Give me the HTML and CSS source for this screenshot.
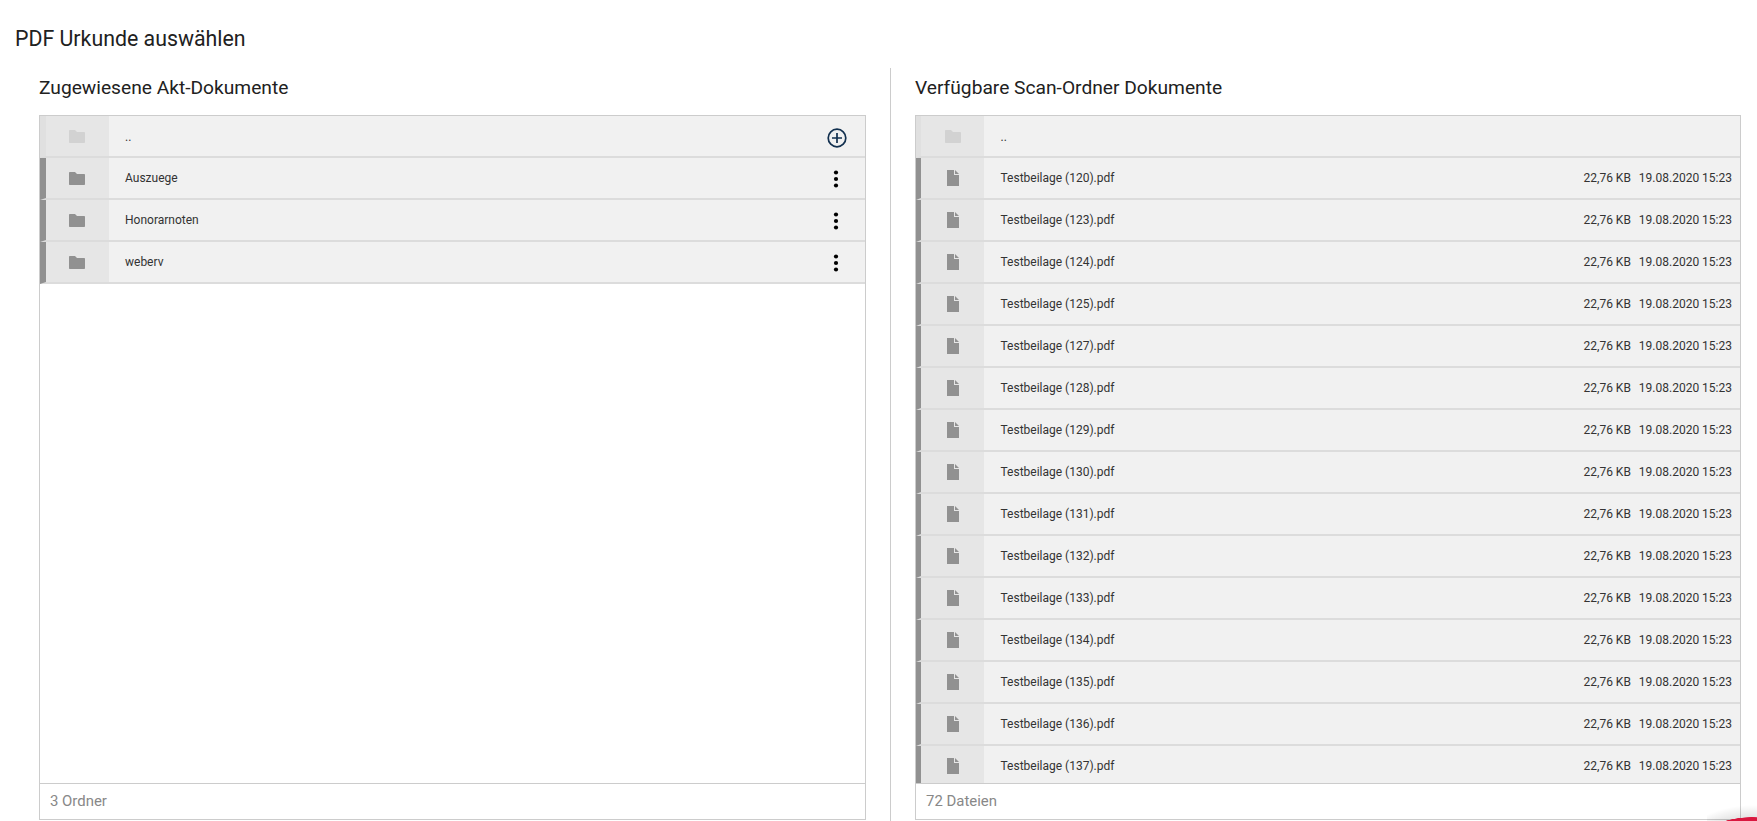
FILE: index.html
```html
<!DOCTYPE html>
<html lang="de">
<head>
<meta charset="utf-8">
<title>PDF Urkunde auswählen</title>
<link rel="stylesheet" href="styles.css">
</head>
<body>
<svg class="defs" width="0" height="0" aria-hidden="true">
  <symbol id="folder" viewBox="0 0 16 13"><path d="M0 1C0 .4.4 0 1 0h5l2 2h7c.6 0 1 .4 1 1v9c0 .6-.4 1-1 1H1c-.6 0-1-.4-1-1z"/></symbol>
  <symbol id="file" viewBox="0 0 12 16"><path d="M0 0h7v5h5v11H0zM8 0l4 4H8z"/></symbol>
  <symbol id="dots" viewBox="0 0 20 20"><circle cx="10" cy="3.500" r="2.100"/><circle cx="10" cy="10" r="2.100"/><circle cx="10" cy="16.500" r="2.100"/></symbol>
</svg>
<h1 class="title">PDF Urkunde auswählen</h1>
<main class="columns">
  <section class="col col-left">
    <h2 class="heading">Zugewiesene Akt-Dokumente</h2>
    <div class="panel">
      <div class="list">
        <div class="row row-up">
          <div class="icon-cell"><svg class="ic-folder"><use href="#folder"/></svg></div>
          <div class="name">..</div>
          <svg class="add" viewBox="0 0 20 20"><circle cx="10" cy="10" r="8.800"/><path d="M10 5v10M5 10h10"/></svg>
        </div>
        <div class="row">
          <div class="icon-cell"><svg class="ic-folder"><use href="#folder"/></svg></div>
          <div class="name">Auszuege</div>
          <svg class="dots"><use href="#dots"/></svg>
        </div>
        <div class="row">
          <div class="icon-cell"><svg class="ic-folder"><use href="#folder"/></svg></div>
          <div class="name">Honorarnoten</div>
          <svg class="dots"><use href="#dots"/></svg>
        </div>
        <div class="row">
          <div class="icon-cell"><svg class="ic-folder"><use href="#folder"/></svg></div>
          <div class="name">weberv</div>
          <svg class="dots"><use href="#dots"/></svg>
        </div>
      </div>
      <div class="foot">3 Ordner</div>
    </div>
  </section>
  <section class="col col-right">
    <h2 class="heading">Verfügbare Scan-Ordner Dokumente</h2>
    <div class="panel">
      <div class="list">
        <div class="row row-up">
          <div class="icon-cell"><svg class="ic-folder"><use href="#folder"/></svg></div>
          <div class="name">..</div>
        </div>
        <div class="row"><div class="icon-cell"><svg class="ic-file"><use href="#file"/></svg></div><div class="name">Testbeilage (120).pdf</div><div class="size">22,76 KB</div><div class="date">19.08.2020 15:23</div></div>
        <div class="row"><div class="icon-cell"><svg class="ic-file"><use href="#file"/></svg></div><div class="name">Testbeilage (123).pdf</div><div class="size">22,76 KB</div><div class="date">19.08.2020 15:23</div></div>
        <div class="row"><div class="icon-cell"><svg class="ic-file"><use href="#file"/></svg></div><div class="name">Testbeilage (124).pdf</div><div class="size">22,76 KB</div><div class="date">19.08.2020 15:23</div></div>
        <div class="row"><div class="icon-cell"><svg class="ic-file"><use href="#file"/></svg></div><div class="name">Testbeilage (125).pdf</div><div class="size">22,76 KB</div><div class="date">19.08.2020 15:23</div></div>
        <div class="row"><div class="icon-cell"><svg class="ic-file"><use href="#file"/></svg></div><div class="name">Testbeilage (127).pdf</div><div class="size">22,76 KB</div><div class="date">19.08.2020 15:23</div></div>
        <div class="row"><div class="icon-cell"><svg class="ic-file"><use href="#file"/></svg></div><div class="name">Testbeilage (128).pdf</div><div class="size">22,76 KB</div><div class="date">19.08.2020 15:23</div></div>
        <div class="row"><div class="icon-cell"><svg class="ic-file"><use href="#file"/></svg></div><div class="name">Testbeilage (129).pdf</div><div class="size">22,76 KB</div><div class="date">19.08.2020 15:23</div></div>
        <div class="row"><div class="icon-cell"><svg class="ic-file"><use href="#file"/></svg></div><div class="name">Testbeilage (130).pdf</div><div class="size">22,76 KB</div><div class="date">19.08.2020 15:23</div></div>
        <div class="row"><div class="icon-cell"><svg class="ic-file"><use href="#file"/></svg></div><div class="name">Testbeilage (131).pdf</div><div class="size">22,76 KB</div><div class="date">19.08.2020 15:23</div></div>
        <div class="row"><div class="icon-cell"><svg class="ic-file"><use href="#file"/></svg></div><div class="name">Testbeilage (132).pdf</div><div class="size">22,76 KB</div><div class="date">19.08.2020 15:23</div></div>
        <div class="row"><div class="icon-cell"><svg class="ic-file"><use href="#file"/></svg></div><div class="name">Testbeilage (133).pdf</div><div class="size">22,76 KB</div><div class="date">19.08.2020 15:23</div></div>
        <div class="row"><div class="icon-cell"><svg class="ic-file"><use href="#file"/></svg></div><div class="name">Testbeilage (134).pdf</div><div class="size">22,76 KB</div><div class="date">19.08.2020 15:23</div></div>
        <div class="row"><div class="icon-cell"><svg class="ic-file"><use href="#file"/></svg></div><div class="name">Testbeilage (135).pdf</div><div class="size">22,76 KB</div><div class="date">19.08.2020 15:23</div></div>
        <div class="row"><div class="icon-cell"><svg class="ic-file"><use href="#file"/></svg></div><div class="name">Testbeilage (136).pdf</div><div class="size">22,76 KB</div><div class="date">19.08.2020 15:23</div></div>
        <div class="row"><div class="icon-cell"><svg class="ic-file"><use href="#file"/></svg></div><div class="name">Testbeilage (137).pdf</div><div class="size">22,76 KB</div><div class="date">19.08.2020 15:23</div></div>
      </div>
      <div class="foot">72 Dateien</div>
    </div>
  </section>
</main>
<div class="fab"></div>
</body>
</html>
```

FILE: styles.css
```css
* { box-sizing: border-box; }
html, body { margin: 0; height: 821px; overflow: hidden; background: #fff; }
body { font-family: Roboto, "Liberation Sans", sans-serif; color: #212121; position: relative; }
.defs { position: absolute; }
.title { margin: 0; padding: 26px 0 0 15px; height: 68px; font-size: 21.33px; line-height: 26px; font-weight: 400; }
.columns { display: flex; height: 753px; }
.col { display: flex; flex-direction: column; }
.col-left { width: 891px; padding: 0 24px 0 39px; border-right: 1px solid #ccc; }
.col-right { width: 866px; padding: 0 16px 0 24px; }
.heading { margin: 0; padding-top: 9px; height: 47px; font-size: 19.2px; line-height: 22px; font-weight: 400; }
.panel { flex: none; height: 705px; display: flex; flex-direction: column; border: 1px solid #ccc; }
.list { flex: 1; min-height: 0; overflow: hidden; }
.row { display: flex; align-items: center; height: 42px; background: #f1f1f1; border-left: 6px solid #919191; border-bottom: 2px solid #dcdcdc; font-size: 12px; color: #333; }
.col-right .row { border-left-width: 5px; }
.row-up { border-left-color: #e0e0e0; }
.row-up .ic-folder { fill: #d2d2d2; }
.icon-cell { flex: none; width: 63px; height: 100%; display: flex; align-items: center; justify-content: center; background: #e6e6e6; }
.ic-folder { width: 16px; height: 13px; fill: #919191; display: block; }
.col-left .ic-folder { margin-right: 1px; }
.col-right .ic-folder { margin-left: 1px; }
.ic-file { width: 12px; height: 16px; fill: #919191; display: block; margin: -1px 0 0 1px; }
.name { flex: 1; padding-left: 16px; padding-bottom: 1px; line-height: 14px; }
.col-right .name { padding-left: 16.5px; }
.row-up .name { padding-top: 2px; }
.size { margin-right: 8px; padding-bottom: 1px; }
.date { margin-right: 8px; padding-bottom: 1px; }
.dots { width: 20px; height: 20px; margin-right: 19px; margin-top: 1px; fill: #000; flex: none; }
.add { width: 20px; height: 20px; margin-right: 18px; margin-top: 3px; flex: none; fill: none; stroke: #12304f; stroke-width: 1.700; }
.foot { flex: none; height: 36px; border-top: 1px solid #ccc; padding: 0 10px; font-size: 14.93px; line-height: 34px; color: #888; background: #fff; }
.fab { position: absolute; left: 1707px; top: 797px; width: 50px; height: 24px; background: radial-gradient(circle 112px at 45px 120px, #d9173f 99.500px, rgba(0,0,0,.1) 100px, rgba(0,0,0,0) 112px); }
```
